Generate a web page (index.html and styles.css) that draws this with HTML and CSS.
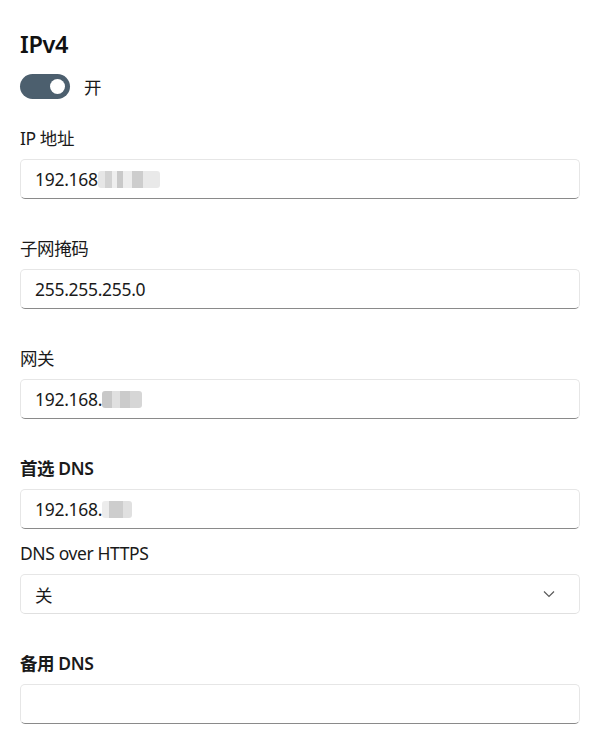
FILE: index.html
```html
<!DOCTYPE html>
<html lang="zh-CN">
<head>
<meta charset="utf-8">
<link rel="stylesheet" href="styles.css">
</head>
<body>
<div class="page">
  <h1 class="title">IPv4</h1>
  <div class="toggle-row">
    <span class="toggle"><span class="knob"></span></span>
    <span class="toggle-label">开</span>
  </div>

  <div class="field">
    <div class="label">IP 地址</div>
    <div class="box"><span class="val">192.168</span><span class="blur b1"></span></div>
  </div>

  <div class="field">
    <div class="label">子网掩码</div>
    <div class="box"><span class="val">255.255.255.0</span></div>
  </div>

  <div class="field">
    <div class="label">网关</div>
    <div class="box"><span class="val">192.168.</span><span class="blur b2"></span></div>
  </div>

  <div class="field">
    <div class="label strong">首选 DNS</div>
    <div class="box"><span class="val">192.168.</span><span class="blur b3"></span></div>
  </div>

  <div class="field tight">
    <div class="label">DNS over HTTPS</div>
    <div class="box combo"><span class="val">关</span>
      <svg class="chev" width="12" height="8" viewBox="0 0 12 8"><path d="M1 1.5 L6 6.5 L11 1.5" fill="none" stroke="#5a5a5a" stroke-width="1.2"/></svg>
    </div>
  </div>

  <div class="field">
    <div class="label strong">备用 DNS</div>
    <div class="box"></div>
  </div>
</div>
</body>
</html>
```

FILE: styles.css
```css
html, body {
  margin: 0;
  padding: 0;
  background: #ffffff;
}
body {
  font-family: "Segoe UI", "Noto Sans", "Noto Sans CJK SC", sans-serif;
  color: #1a1a1a;
}
.page {
  padding: 28px 14px 0 20px;
  width: 560px;
}
.title {
  margin: 0;
  font-size: 23.5px;
  line-height: 32px;
  font-weight: 600;
  color: #111;
  letter-spacing: -0.3px;
}
.toggle-row {
  display: flex;
  align-items: center;
  gap: 14px;
  margin-top: 14px;
  height: 25px;
}
.toggle {
  width: 50px;
  height: 25px;
  border-radius: 13px;
  background: #4c5f6e;
  display: flex;
  align-items: center;
  justify-content: flex-end;
  padding-right: 5px;
  box-sizing: border-box;
}
.knob {
  width: 15px;
  height: 15px;
  border-radius: 50%;
  background: #fff;
}
.toggle-label {
  font-size: 17.5px;
  line-height: 24px;
  font-family: "Noto Sans CJK SC", sans-serif;
}
.field {
  margin-top: 27px;
}
.field + .field {
  margin-top: 37px;
}
.field + .field.tight {
  margin-top: 12px;
}
.label {
  font-size: 17.5px;
  line-height: 24px;
  height: 24px;
  margin-bottom: 9px;
  color: #1a1a1a;
  letter-spacing: -0.4px;
}
.label.strong {
  font-weight: 600;
}
.box {
  position: relative;
  height: 40px;
  box-sizing: border-box;
  border: 1px solid #e6e6e6;
  border-bottom: 1px solid #8a8a8a;
  border-radius: 5px;
  background: #fff;
  display: flex;
  align-items: center;
  padding-left: 14px;
}
.val {
  font-size: 17.5px;
  color: #1a1a1a;
  letter-spacing: -0.3px;
}
.combo {
  justify-content: space-between;
  padding-right: 24px;
  border-bottom-color: #e0e0e0;
}
.combo .val {
  font-family: "Noto Sans CJK SC", sans-serif;
}
.blur {
  display: inline-block;
  height: 17px;
  border-radius: 3px;
}
.b1 {
  width: 62px;
  background: linear-gradient(90deg, #e6e6e6 0 12%, #d2d2d2 12% 22%, #eeeeee 22% 30%, #c9c9c9 30% 40%, #ededed 40% 55%, #cdcdcd 55% 72%, #e9e9e9 72% 100%);
}
.b2 {
  width: 40px;
  background: linear-gradient(90deg, #c8c8c8 0 25%, #e0e0e0 25% 45%, #cbcbcb 45% 70%, #d6d6d6 70%);
}
.b3 {
  width: 30px;
  background: linear-gradient(90deg, #ececec 0 25%, #cdcdcd 25% 70%, #e0e0e0 70%);
}
```
